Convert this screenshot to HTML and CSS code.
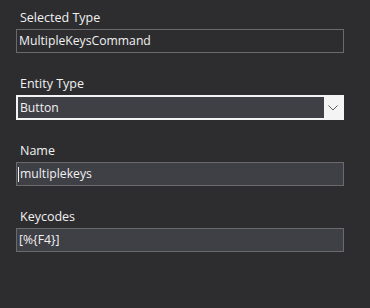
FILE: index.html
```html
<!DOCTYPE html>
<html lang="en">
<head>
    <meta charset="UTF-8">
    <title>Entity Properties</title>
    <link rel="stylesheet" href="styles.css">
</head>
<body>
    <div class="panel">
        <div class="field">
            <div class="label">Selected Type</div>
            <div class="box readonly">MultipleKeysCommand</div>
        </div>
        <div class="field">
            <div class="label">Entity Type</div>
            <div class="box select">
                <span class="value">Button</span>
                <span class="arrow">
                    <svg width="10" height="6" viewBox="0 0 10 6"><path d="M0.5 0.5 L5 5 L9.5 0.5" fill="none" stroke="#5a5a5a" stroke-width="1"/></svg>
                </span>
            </div>
        </div>
        <div class="field">
            <div class="label">Name</div>
            <div class="box focused"><span class="caret"></span>multiplekeys</div>
        </div>
        <div class="field">
            <div class="label">Keycodes</div>
            <div class="box">[%{F4}]</div>
        </div>
    </div>
</body>
</html>
```

FILE: styles.css
```css
body {
    margin: 0;
    background: #2d2d30;
    font-family: "Open Sans", "Noto Sans", sans-serif;
    font-size: 12px;
    color: #f1f1f1;
}

.panel {
    width: 328px;
    padding: 8px 0 0 16px;
    display: flex;
    flex-direction: column;
    gap: 21px;
}

.label {
    height: 21px;
    line-height: 19px;
    padding-left: 4px;
    font-size: 12.5px;
}

.box {
    box-sizing: border-box;
    height: 24px;
    line-height: 22px;
    padding-left: 2px;
    background: #3f3f46;
    border: 1px solid #6a6a6a;
    color: #f1f1f1;
    display: flex;
    align-items: center;
    font-size: 12.2px;
}

.readonly {
    background: #2d2d30;
}

.select {
    height: 25px;
    border: 2px solid #f4f4f4;
    padding-left: 2px;
}

.select .value {
    flex: 1;
}

.arrow {
    width: 18px;
    height: 100%;
    background: #f4f4f4;
    display: flex;
    align-items: center;
    justify-content: center;
}

.focused {
    padding-left: 1px;
}

.caret {
    display: inline-block;
    width: 1px;
    height: 15px;
    margin-right: 1px;
    background: #f1f1f1;
}
```
